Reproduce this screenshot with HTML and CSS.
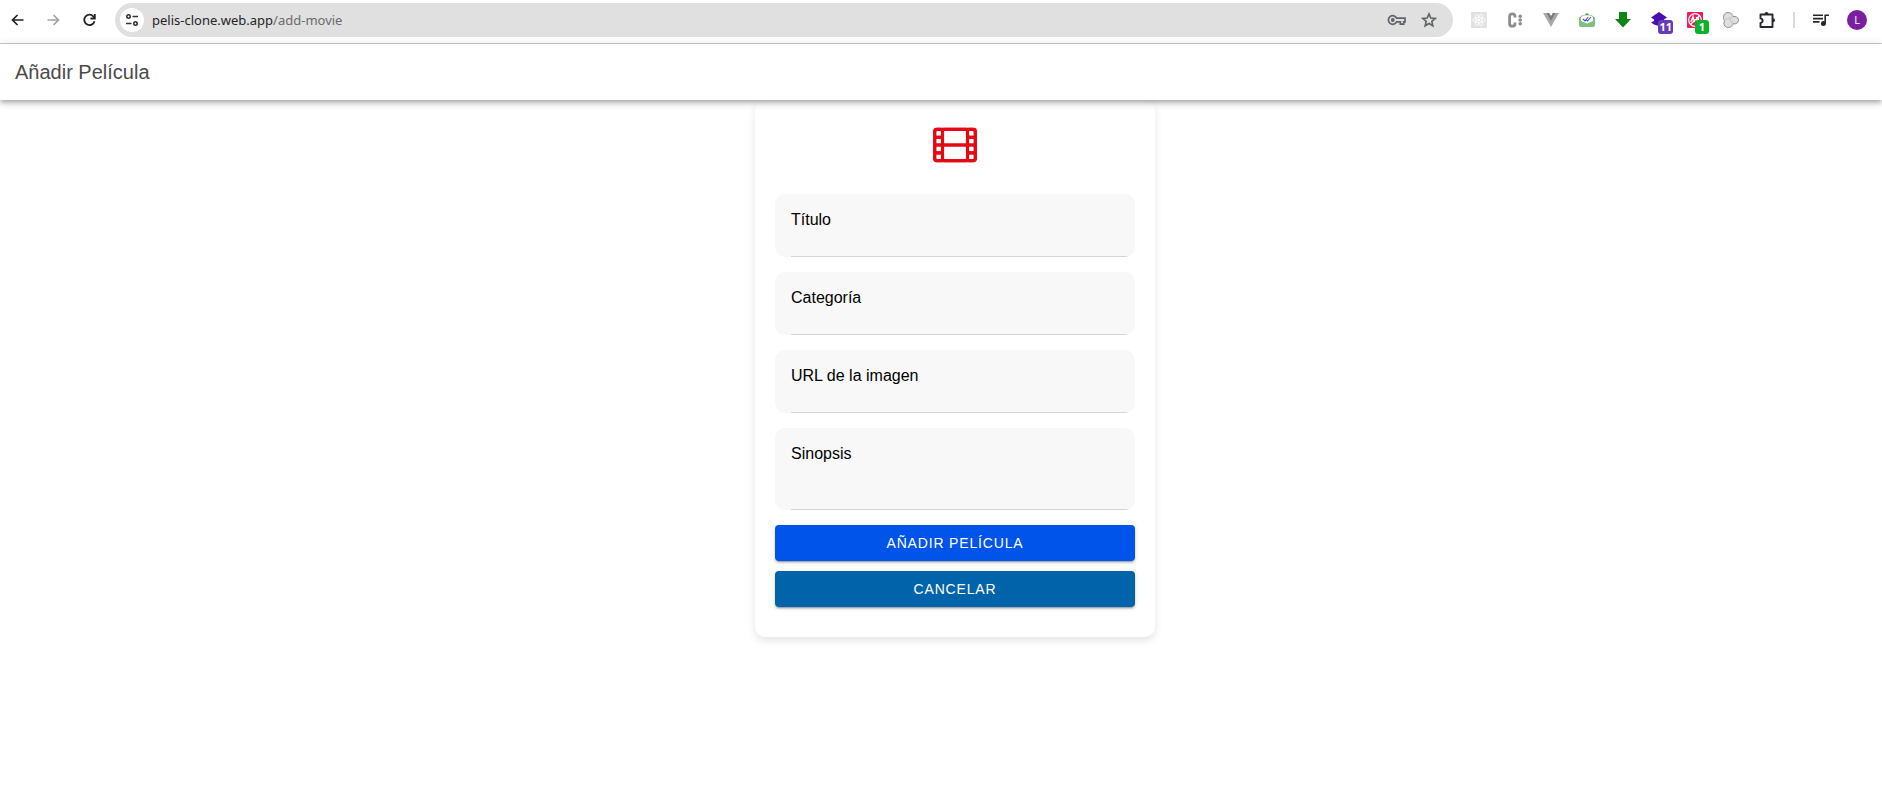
FILE: index.html
```html
<!DOCTYPE html>
<html lang="es">
<head>
<meta charset="utf-8">
<title>Añadir Película</title>
<link rel="stylesheet" href="styles.css">
</head>
<body>
<div class="browser-bar">
  <nav class="nav-buttons" aria-label="Navegación">
    <button class="tool" aria-label="Atrás"><svg width="16" height="16" viewBox="0 0 16 16" fill="none" stroke="#202124" stroke-width="1.7"><path d="M13.500 8H2.500M7.500 3L2.500 8l5 5"/></svg></button>
    <button class="tool" aria-label="Adelante"><svg width="16" height="16" viewBox="0 0 16 16" fill="none" stroke="#a3a3a3" stroke-width="1.7"><path d="M1.500 8h11M7.500 3l5 5-5 5"/></svg></button>
    <button class="tool" aria-label="Recargar"><svg width="16" height="16" viewBox="0 0 16 16" fill="none" stroke="#202124" stroke-width="1.8"><path d="M12.500 9.2A5.2 5.2 0 1 1 11.300 4.300L12.800 6"/><path d="M12.800 2v4.500H8.500"/></svg></button>
  </nav>
  <div class="address">
    <button class="site-info" aria-label="Información del sitio"><svg width="14" height="14" viewBox="0 0 14 14" fill="none" stroke="#303134" stroke-width="1.6"><circle cx="3.500" cy="3.500" r="1.700"/><path d="M7.500 3.500H13M1 10.500h5.500"/><circle cx="10.500" cy="10.500" r="1.700"/></svg></button>
    <a class="url" href="#"><span class="host">pelis-clone.web.app</span>/add-movie</a>
    <button class="address-tool" aria-label="Contraseñas"><svg width="20" height="16" viewBox="0 0 20 16" fill="none" stroke="#5f6368" stroke-width="1.700"><path d="M9.600 6.200H18v3.600h-1.300v2.400h-3.400V9.800H9.600A4.300 4.300 0 1 1 9.600 6.200z"/><circle cx="5.800" cy="8" r="1.900" fill="#5f6368" stroke="none"/></svg></button>
    <button class="address-tool" aria-label="Añadir a marcadores"><svg width="16" height="16" viewBox="0 0 16 16" fill="none" stroke="#5f6368" stroke-width="1.600"><path d="M8 1.900l1.750 4.150 4.500.4-3.400 2.950 1 4.400L8 11.450 4.150 13.800l1-4.400-3.400-2.950 4.500-.4z"/></svg></button>
  </div>
  <div class="extensions">
    <button class="tool" aria-label="React"><svg width="16" height="16" viewBox="0 0 16 16"><path fill="#e1e1e1" d="M0 0h16v16H0z"/><g fill="none" stroke="#fff" stroke-width=".8"><ellipse cx="8" cy="8" rx="6.300" ry="2.500"/><ellipse cx="8" cy="8" rx="6.300" ry="2.500" transform="rotate(60 8 8)"/><ellipse cx="8" cy="8" rx="6.300" ry="2.500" transform="rotate(120 8 8)"/></g><circle cx="8" cy="8" r="1.300" fill="#fff"/></svg></button>
    <button class="tool" aria-label="Extensión C"><svg width="16" height="16" viewBox="0 0 16 16"><path fill="none" stroke="#8d8d8d" stroke-width="2.800" d="M8 5.500V4.300C8 2.700 7 1.800 5.300 1.800S2.600 2.800 2.600 4.300v7.400c0 1.500 1 2.500 2.700 2.500S8 13.300 8 11.700v-1.200"/><g fill="#8d8d8d"><circle cx="13.200" cy="4.300" r="1.800"/><circle cx="13.200" cy="8" r="1.800"/><circle cx="13.200" cy="11.700" r="1.800"/></g></svg></button>
    <button class="tool" aria-label="Vue"><svg width="16" height="16" viewBox="0 0 16 16"><path fill="#a9a9a9" d="M0 1h3.200L8 9.200 12.800 1H16L8 15z"/><path fill="#7e7e7e" d="M3.200 1h3L8 4l1.800-3h3L8 9.400z"/></svg></button>
    <button class="tool" aria-label="Correo"><svg width="16" height="16" viewBox="0 0 16 16"><path fill="#4f9f53" d="M0 6l3-2.500h2L8 1l3 2.500h2L16 6v2H0z"/><path fill="#7ec17f" d="M0 6h16v7a2 2 0 0 1-2 2H2a2 2 0 0 1-2-2z"/><path fill="#fff" d="M2 5c2-2.500 10-2.500 12 0v4l-6 2.500L2 9z"/><path fill="none" stroke="#4b50c8" stroke-width="1.100" d="M4 7l2 2 3.200-4M7.500 8.200l.9.800L12 5"/></svg></button>
    <button class="tool" aria-label="Descargas"><svg width="16" height="16" viewBox="0 0 16 16"><path fill="#118514" d="M4 0h8v7h4l-8 8.500L0 7h4z"/></svg></button>
    <button class="tool" aria-label="Extensión, 11 avisos"><svg width="16" height="16" viewBox="0 0 16 16"><path fill="#4a0db3" d="M8 0l8 5.500-3 2V11l-5 3-5-1.500-3-2L3 9V7.500L0 5.500z"/></svg><span class="badge badge-purple">11</span></button>
    <button class="tool" aria-label="Bloqueador, 1 aviso"><svg width="16" height="16" viewBox="0 0 16 16"><rect width="16" height="16" rx="1" fill="#f5195c"/><g fill="none" stroke="#fff" stroke-width="1.200"><circle cx="8" cy="8" r="6.300"/><path d="M3.500 12.500l9-9M3.800 10L6 4.500 7.500 10M4.500 8h3M9.500 11V5.500h2v2h-2l2 3"/></g></svg><span class="badge badge-green">1</span></button>
    <button class="tool" aria-label="Extensión de círculos"><svg width="16" height="16" viewBox="0 0 16 16"><path fill="#dedede" stroke="#858585" stroke-width=".9" d="M1.500 2C3 .1 7 0 9 2.300c.7.700.8 1.500.9 2.300 3-.8 5.600 1 5.600 3.600s-2.500 4.300-5.500 3.400c-.3 3-3.500 4.500-6.500 3.600C1 14.300.2 11.500 1.500 9 .2 7 .2 3.700 1.500 2z"/><path fill="none" stroke="#c6c6c6" stroke-width=".8" d="M1.500 9C3 6.500 7 6 9.800 4.600M3 7c3-1 7 1 7 4.600M9.800 4.600C6.500 5.500 6.500 10 10 11.600"/></svg></button>
    <button class="tool" aria-label="Extensiones"><svg width="18" height="18" viewBox="0 0 18 18"><path fill="none" stroke="#27282b" stroke-width="1.900" stroke-linejoin="round" d="M2.500 3.500h12v12.500h-12v-4c2.800-.6 2.800-4 0-4.600z"/><path fill="#27282b" d="M6.500 3a2 2 0 0 1 4 0zM15 7.200a2 2 0 0 1 0 4z"/></svg></button>
    <span class="divider"></span>
    <button class="tool" aria-label="Control multimedia"><svg width="16" height="16" viewBox="0 0 16 16"><path fill="none" stroke="#27282b" stroke-width="1.600" d="M0 3.300h10M0 6.600h10M0 9.900h6.500M12.200 11.500V3.300H16"/><circle cx="10.400" cy="11.500" r="2.500" fill="#27282b"/></svg></button>
    <button class="tool" aria-label="Perfil"><span class="avatar">L</span></button>
  </div>
</div>
<header class="app-header"><h1 class="app-title">Añadir Película</h1></header>
<main class="page">
  <form class="card">
    <svg class="film" viewBox="0 0 512 512" fill="none" stroke="#e50914" stroke-width="32" stroke-linejoin="round">
      <rect x="48" y="96" width="416" height="320" rx="28"/>
      <rect x="384" y="336" width="80" height="80" rx="16"/><rect x="384" y="256" width="80" height="80" rx="16"/><rect x="384" y="176" width="80" height="80" rx="16"/><rect x="384" y="96" width="80" height="80" rx="16"/>
      <rect x="48" y="336" width="80" height="80" rx="16"/><rect x="48" y="256" width="80" height="80" rx="16"/><rect x="48" y="176" width="80" height="80" rx="16"/><rect x="48" y="96" width="80" height="80" rx="16"/>
      <rect x="128" y="96" width="256" height="160" rx="16"/><rect x="128" y="256" width="256" height="160" rx="16"/>
    </svg>
    <div class="field"><div class="field-inner"><label for="titulo">Título</label><input id="titulo" type="text"></div></div>
    <div class="field"><div class="field-inner"><label for="categoria">Categoría</label><input id="categoria" type="text"></div></div>
    <div class="field"><div class="field-inner"><label for="imagen">URL de la imagen</label><input id="imagen" type="text"></div></div>
    <div class="field"><div class="field-inner"><label for="sinopsis">Sinopsis</label><textarea id="sinopsis"></textarea></div></div>
    <div class="actions">
      <button class="action primary" type="submit">Añadir película</button>
      <button class="action secondary" type="button">Cancelar</button>
    </div>
  </form>
</main>
</body>
</html>
```
FILE: styles.css
```css
* { box-sizing: border-box; }

body {
  margin: 0;
  background: #fff;
  font-family: "Liberation Sans", Arial, sans-serif;
}

button {
  border: 0;
  padding: 0;
  background: none;
  font: inherit;
  cursor: pointer;
}

svg { display: block; }

.browser-bar {
  display: flex;
  align-items: center;
  gap: 8px;
  height: 44px;
  padding: 0 7px 4px 0;
  border-bottom: 1px solid #c9cbc9;
}

.nav-buttons, .extensions { display: flex; align-items: center; }
.nav-buttons { gap: 1px; }

.tool {
  position: relative;
  display: flex;
  align-items: center;
  justify-content: center;
  width: 36px;
  height: 34px;
}
.nav-buttons .tool { width: 35px; }

.address {
  flex: 1;
  display: flex;
  align-items: center;
  height: 34px;
  padding: 0 8px 0 5px;
  border-radius: 17px;
  background: #e0e0e0;
}

.site-info {
  display: flex;
  align-items: center;
  justify-content: center;
  width: 24px;
  height: 24px;
  border-radius: 50%;
  background: #fff;
}

.url {
  flex: 1;
  margin-left: 8px;
  color: #6b6b6b;
  font: 13px/20px "Noto Sans", sans-serif;
  text-decoration: none;
}
.host { color: #24252a; }

.address-tool {
  display: flex;
  align-items: center;
  justify-content: center;
  width: 32px;
  height: 32px;
}

.badge {
  position: absolute;
  top: 17px;
  right: 4px;
  min-width: 14px;
  height: 14px;
  padding: 0 1px;
  border-radius: 3px;
  color: #fff;
  font: bold 11px/14px "Open Sans", sans-serif;
  text-align: center;
}
.badge-purple { background: #673ab7; }
.badge-green { background: #0cb02b; }

.divider {
  width: 2px;
  height: 16px;
  margin: 0 8px;
  background: #dcdad9;
}

.avatar {
  width: 20px;
  height: 20px;
  border-radius: 50%;
  background: #7b1fa2;
  color: #fff;
  font: 11px/20px "Open Sans", sans-serif;
}

.app-header {
  position: relative;
  z-index: 1;
  display: flex;
  align-items: center;
  height: 56px;
  padding: 0 15px;
  background: #fff;
  box-shadow: 0 2px 4px -1px rgba(0, 0, 0, .2), 0 4px 5px 0 rgba(0, 0, 0, .14), 0 1px 10px 0 rgba(0, 0, 0, .12);
}

.app-title {
  margin: 0;
  color: #4a4a4a;
  font-size: 20px;
  font-weight: 400;
  line-height: 24px;
}

.page {
  display: flex;
  justify-content: center;
  padding: 0 0 32px 28px;
}

.card {
  display: flex;
  flex-direction: column;
  gap: 15px;
  width: 100%;
  max-width: 400px;
  padding: 20px 20px 30px;
  border-radius: 10px;
  box-shadow: 0 4px 8px rgba(0, 0, 0, .1);
}

.film {
  align-self: center;
  width: 50px;
  height: 50px;
  margin-bottom: 9px;
}

.field {
  overflow: hidden;
  padding-left: 16px;
  border-radius: 10px;
  background: #f8f8f8;
}
.field-inner {
  display: flex;
  flex-direction: column;
  padding: 16px 16px 0 0;
  border-bottom: 1px solid #d4d4d4;
}
.field label {
  color: #000;
  font-size: 16px;
  line-height: 20px;
}
.field input, .field textarea {
  width: 100%;
  height: 26px;
  padding: 0;
  border: 0;
  outline: 0;
  background: none;
  font: inherit;
  resize: none;
}
.field textarea { height: 45px; }

.actions {
  display: flex;
  flex-direction: column;
  gap: 10px;
}
.action {
  height: 36px;
  border-radius: 4px;
  box-shadow: 0 3px 1px -2px rgba(0, 0, 0, .2), 0 2px 2px 0 rgba(0, 0, 0, .14), 0 1px 5px 0 rgba(0, 0, 0, .12);
  color: #fff;
  font-size: 14px;
  letter-spacing: .06em;
  text-transform: uppercase;
}
.primary { background: #0054e9; }
.secondary { background: #0163aa; }
```
